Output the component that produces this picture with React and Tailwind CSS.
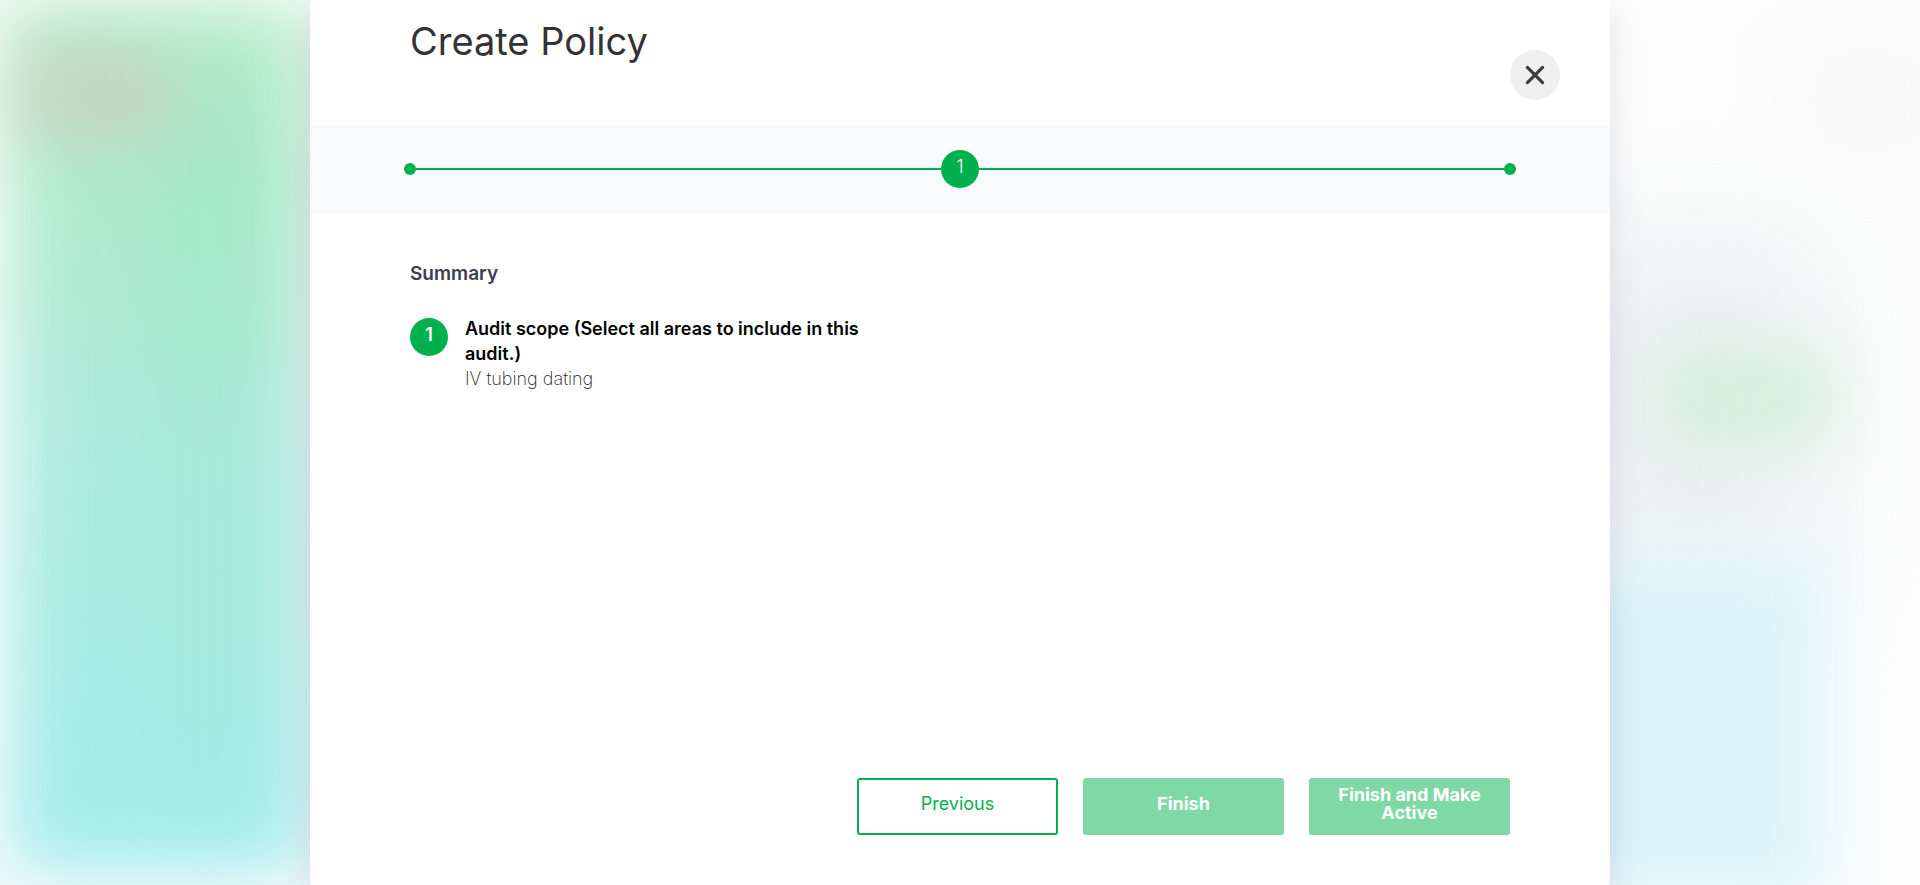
function Backdrop() {
  return (
    <div aria-hidden="true" className="absolute inset-0 overflow-hidden bg-[#fdfdfd]">
      <div className="absolute left-[8px] top-[4px] h-[870px] w-[300px] bg-linear-to-b from-[#b0ebc4] via-[#adebdc] to-[#a2ebef] blur-[36px]" />
      <div className="absolute left-[150px] top-[110px] h-[690px] w-[110px] bg-linear-to-b from-[#a0e6c2] via-[#a8e9d6] to-[#a5e9e4] opacity-80 blur-[36px]" />
      <div className="absolute left-[20px] top-[60px] h-[70px] w-[150px] bg-[#cfcdbc] blur-[38px]" />
      <div className="absolute left-[1570px] top-[240px] h-[330px] w-[250px] bg-[#ebeff0] blur-[60px]" />
      <div className="absolute left-[1800px] top-[40px] h-[120px] w-[140px] bg-[#f7f7f7] blur-[40px]" />
      <div className="absolute left-[1665px] top-[355px] h-[85px] w-[165px] bg-[#d2f0de] blur-[32px]" />
      <div className="absolute left-[1540px] top-[560px] h-[340px] w-[285px] bg-[#d9f4fa] blur-[34px]" />
    </div>
  );
}

function Stepper() {
  return (
    <div className="flex h-[88px] items-center bg-[#f9fafc] px-[94px]">
      <span className="size-3 rounded-full bg-[#00b04f]" />
      <span className="h-[2px] flex-1 bg-[#00b04f]" />
      <span className="flex size-[38px] items-center justify-center rounded-full bg-[#00b04f] pb-1 text-lg font-light text-white">
        1
      </span>
      <span className="h-[2px] flex-1 bg-[#00b04f]" />
      <span className="size-3 rounded-full bg-[#00b04f]" />
    </div>
  );
}

function ActionButton({ primary, children }) {
  return (
    <button
      type="button"
      className={
        primary
          ? "h-[57px] w-[201px] rounded-[3px] bg-[#80d8a7] px-6 pb-1.5 text-lg leading-[18px] font-bold text-white"
          : "h-[57px] w-[201px] rounded-[3px] border-2 border-[#00b04f] bg-white px-6 pb-1.5 text-lg leading-[18px] text-[#00b04f]"
      }
    >
      {children}
    </button>
  );
}

export default function App() {
  return (
    <div className="relative flex min-h-screen justify-center font-['Inter',sans-serif]">
      <Backdrop />
      <main
        role="dialog"
        aria-labelledby="dialog-title"
        className="relative flex w-full max-w-[1300px] flex-col rounded-[3px] bg-white shadow-[0_15px_35px_rgba(50,50,93,0.15)]"
      >
        <header className="flex h-[125px] justify-between pr-[50px] pl-[100px]">
          <h1 id="dialog-title" className="pt-4 text-[38px] leading-[50px] text-[#333333]">
            Create Policy
          </h1>
          <button
            type="button"
            aria-label="Close"
            className="mt-[50px] flex size-[50px] items-center justify-center rounded-full bg-[#efefef] text-[#3c3c3c]"
          >
            <svg width="20" height="20" viewBox="0 0 20 20" fill="none" stroke="currentColor" strokeWidth="3.2" strokeLinecap="round">
              <path d="M2.4 2.4 17.6 17.6M17.6 2.4 2.4 17.6" />
            </svg>
          </button>
        </header>
        <Stepper />
        <section className="flex-1 px-[100px] pt-12">
          <h2 className="text-[19px] leading-[25px] font-semibold text-[#3d3d4f]">Summary</h2>
          <div className="mt-[30px] flex items-start gap-[17px]">
            <span className="mt-[2px] flex size-[38px] shrink-0 items-center justify-center rounded-full bg-[#00b04f] pb-1 text-lg font-semibold text-white">
              1
            </span>
            <div className="max-w-[440px] text-lg leading-[25px]">
              <h3 className="font-semibold text-black">
                Audit scope (Select all areas to include in this audit.)
              </h3>
              <p className="font-extralight text-[#222222]">IV tubing dating</p>
            </div>
          </div>
        </section>
        <footer className="flex justify-end gap-[25px] px-[100px] pb-[50px]">
          <ActionButton>Previous</ActionButton>
          <ActionButton primary>Finish</ActionButton>
          <ActionButton primary>Finish and Make Active</ActionButton>
        </footer>
      </main>
    </div>
  );
}
